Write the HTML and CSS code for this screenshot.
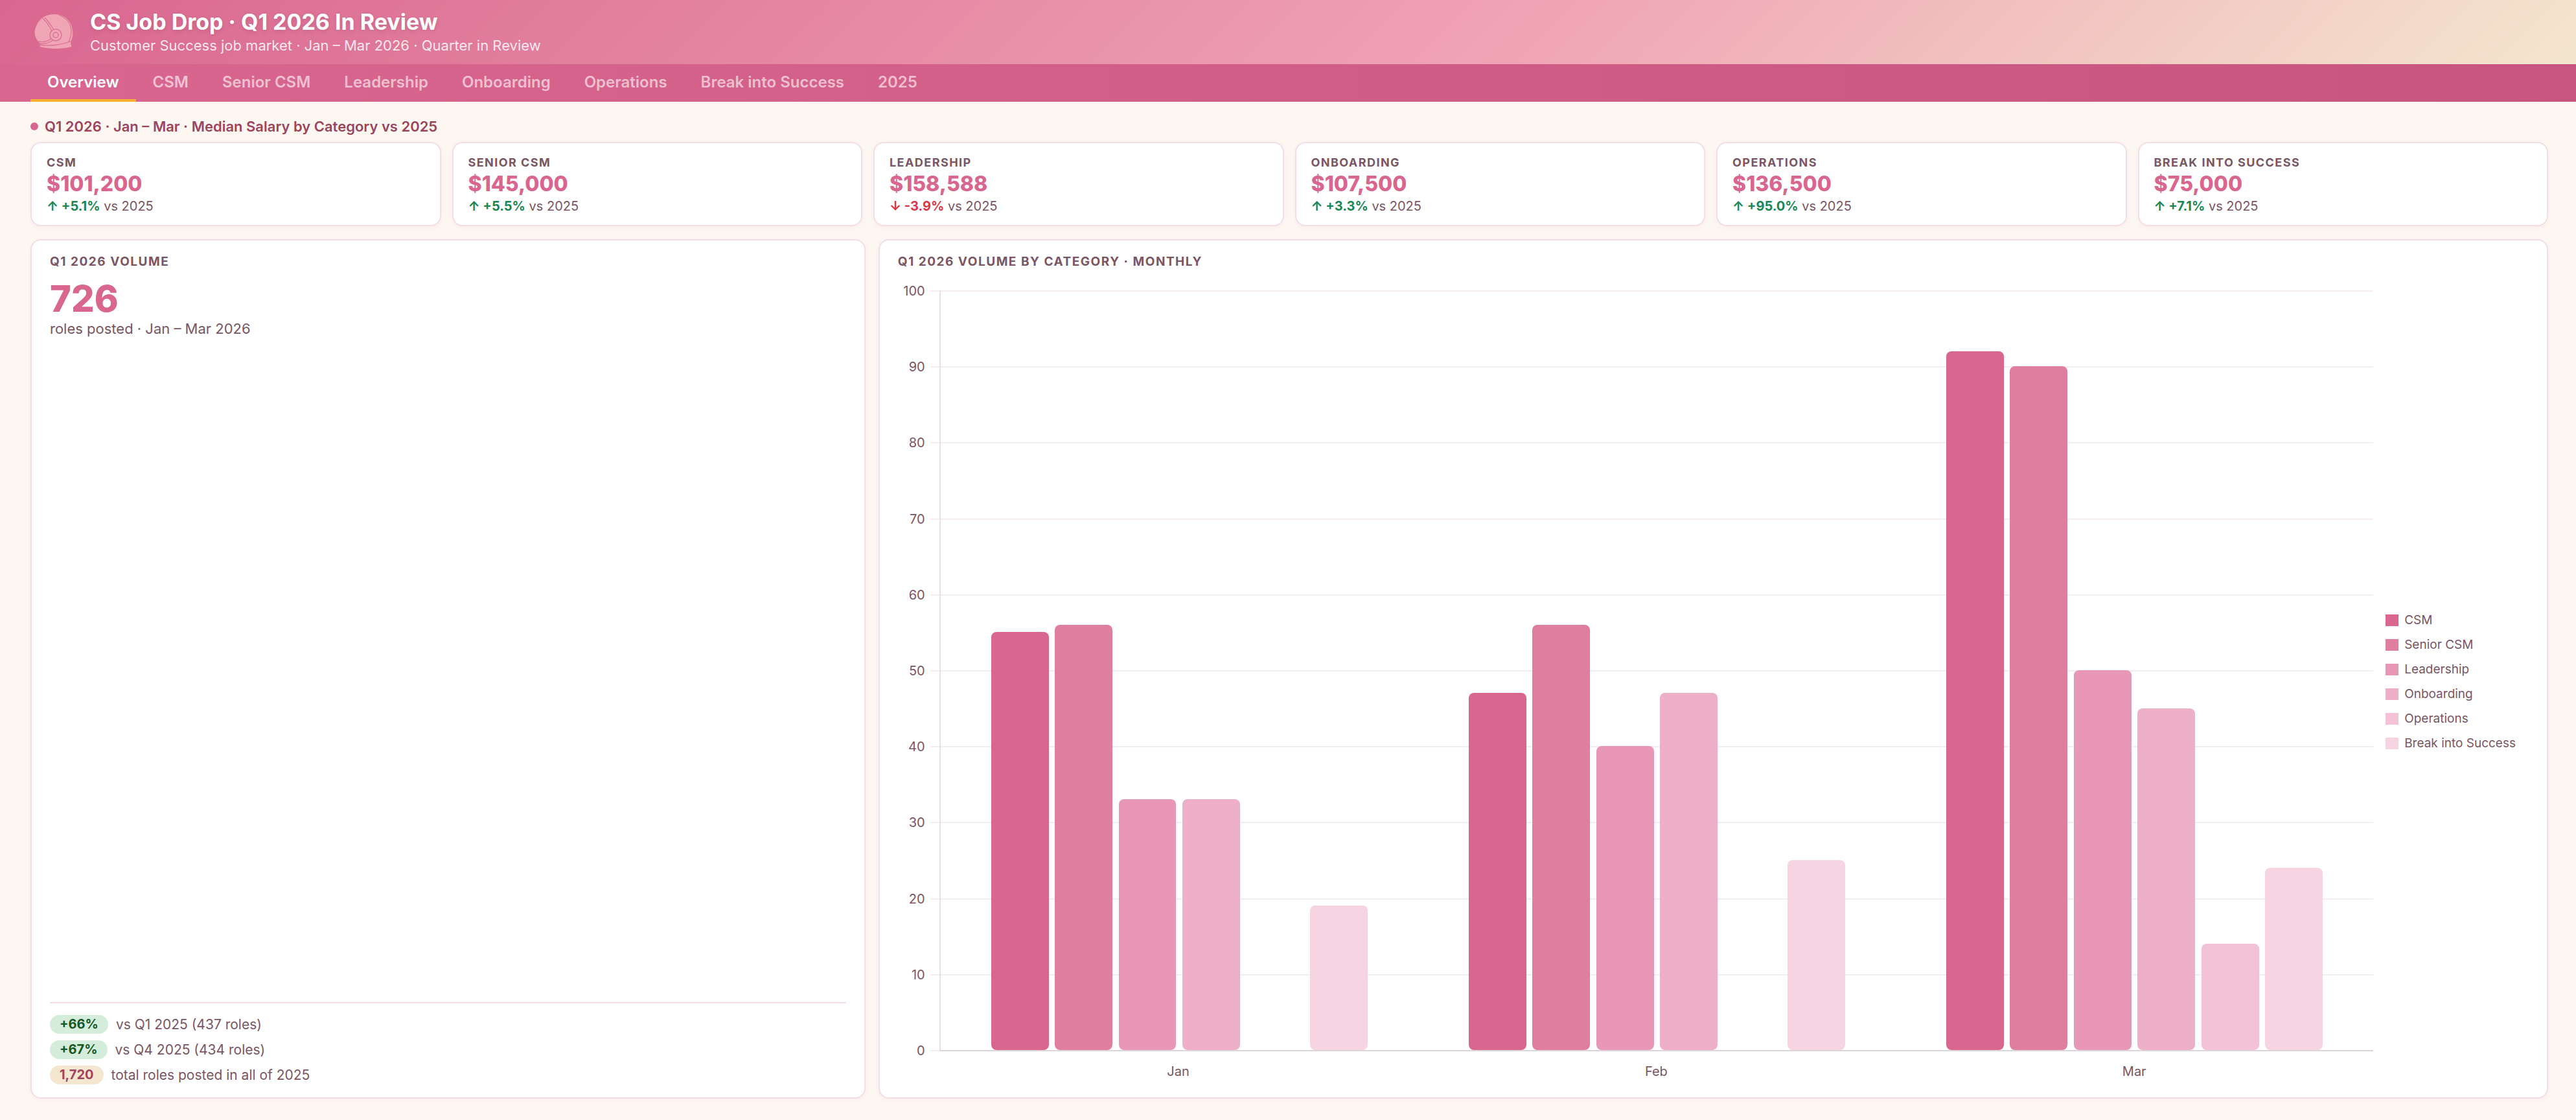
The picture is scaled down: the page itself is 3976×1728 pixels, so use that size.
FILE: index.html
```html
<!DOCTYPE html>
<html lang="en">
<head>
    <meta charset="UTF-8">
    <meta name="viewport" content="width=device-width, initial-scale=1.0">
    <title>CS Job Drop · Q1 2026 In Review</title>
    <link rel="stylesheet" href="styles.css">
</head>
<body>
    <header class="header">
        <svg class="logo" viewBox="0 0 76 60" aria-hidden="true">
            <path class="helmet" d="M12 45C6 38 5 29 9 21C14 9 24 3 37 3C53 3 64 14 65 29C66 36 64 42 62 46L63 53C52 57 27 57 15 53L14 48Z"/>
            <path class="helmet-line" d="M22 8C27 13 32 20 36 27M19 9C25 15 30 22 33 29M12 45C22 47 28 44 32 40M13 48C24 50 31 46 36 42M14 50C29 53 48 50 62 45M44 4C56 9 63 18 63 30C63 36 61 41 59 46"/>
            <circle class="helmet-ear" cx="39" cy="35" r="9"/>
            <circle class="helmet-ear" cx="39" cy="35" r="4"/>
        </svg>
        <div>
            <h1>CS Job Drop · Q1 2026 In Review</h1>
            <p class="subtitle">Customer Success job market · Jan – Mar 2026 · Quarter in Review</p>
        </div>
    </header>
    <nav class="tabs">
        <button class="tab active">Overview</button>
        <button class="tab">CSM</button>
        <button class="tab">Senior CSM</button>
        <button class="tab">Leadership</button>
        <button class="tab">Onboarding</button>
        <button class="tab">Operations</button>
        <button class="tab">Break into Success</button>
        <button class="tab">2025</button>
    </nav>
    <main class="content">
        <h2 class="section-title">Q1 2026 · Jan – Mar · Median Salary by Category vs 2025</h2>
        <div class="kpi-row">
            <div class="kpi">
                <div class="kpi-label">CSM</div>
                <div class="kpi-value">$101,200</div>
                <div class="kpi-delta"><b class="up">↑ +5.1%</b> vs 2025</div>
            </div>
            <div class="kpi">
                <div class="kpi-label">Senior CSM</div>
                <div class="kpi-value">$145,000</div>
                <div class="kpi-delta"><b class="up">↑ +5.5%</b> vs 2025</div>
            </div>
            <div class="kpi">
                <div class="kpi-label">Leadership</div>
                <div class="kpi-value">$158,588</div>
                <div class="kpi-delta"><b class="down">↓ -3.9%</b> vs 2025</div>
            </div>
            <div class="kpi">
                <div class="kpi-label">Onboarding</div>
                <div class="kpi-value">$107,500</div>
                <div class="kpi-delta"><b class="up">↑ +3.3%</b> vs 2025</div>
            </div>
            <div class="kpi">
                <div class="kpi-label">Operations</div>
                <div class="kpi-value">$136,500</div>
                <div class="kpi-delta"><b class="up">↑ +95.0%</b> vs 2025</div>
            </div>
            <div class="kpi">
                <div class="kpi-label">Break into Success</div>
                <div class="kpi-value">$75,000</div>
                <div class="kpi-delta"><b class="up">↑ +7.1%</b> vs 2025</div>
            </div>
        </div>
        <div class="panels">
            <section class="card">
                <h3 class="card-title">Q1 2026 Volume</h3>
                <div class="big-number">726</div>
                <div class="big-caption">roles posted · Jan – Mar 2026</div>
                <div class="compare">
                    <div class="compare-row"><span class="pill">+66%</span>vs Q1 2025 (437 roles)</div>
                    <div class="compare-row"><span class="pill">+67%</span>vs Q4 2025 (434 roles)</div>
                    <div class="compare-row"><span class="pill neutral">1,720</span>total roles posted in all of 2025</div>
                </div>
            </section>
            <section class="card">
                <h3 class="card-title">Q1 2026 Volume by Category · Monthly</h3>
                <div class="chart">
                    <div class="chart-main">
                        <div class="plot">
                            <div class="gridlines">
                                <div class="grid-row">100</div>
                                <div class="grid-row">90</div>
                                <div class="grid-row">80</div>
                                <div class="grid-row">70</div>
                                <div class="grid-row">60</div>
                                <div class="grid-row">50</div>
                                <div class="grid-row">40</div>
                                <div class="grid-row">30</div>
                                <div class="grid-row">20</div>
                                <div class="grid-row">10</div>
                                <div class="grid-row">0</div>
                            </div>
                            <div class="bars">
                                <div class="month">
                                    <div class="bar csm" style="height: 55%"></div>
                                    <div class="bar senior" style="height: 56%"></div>
                                    <div class="bar leadership" style="height: 33%"></div>
                                    <div class="bar onboarding" style="height: 33%"></div>
                                    <div class="bar operations" style="height: 0%"></div>
                                    <div class="bar break" style="height: 19%"></div>
                                </div>
                                <div class="month">
                                    <div class="bar csm" style="height: 47%"></div>
                                    <div class="bar senior" style="height: 56%"></div>
                                    <div class="bar leadership" style="height: 40%"></div>
                                    <div class="bar onboarding" style="height: 47%"></div>
                                    <div class="bar operations" style="height: 0%"></div>
                                    <div class="bar break" style="height: 25%"></div>
                                </div>
                                <div class="month">
                                    <div class="bar csm" style="height: 92%"></div>
                                    <div class="bar senior" style="height: 90%"></div>
                                    <div class="bar leadership" style="height: 50%"></div>
                                    <div class="bar onboarding" style="height: 45%"></div>
                                    <div class="bar operations" style="height: 14%"></div>
                                    <div class="bar break" style="height: 24%"></div>
                                </div>
                            </div>
                        </div>
                        <div class="x-labels">
                            <span>Jan</span>
                            <span>Feb</span>
                            <span>Mar</span>
                        </div>
                    </div>
                    <ul class="legend">
                        <li><span class="swatch csm"></span>CSM</li>
                        <li><span class="swatch senior"></span>Senior CSM</li>
                        <li><span class="swatch leadership"></span>Leadership</li>
                        <li><span class="swatch onboarding"></span>Onboarding</li>
                        <li><span class="swatch operations"></span>Operations</li>
                        <li><span class="swatch break"></span>Break into Success</li>
                    </ul>
                </div>
            </section>
        </div>
    </main>
</body>
</html>
```

FILE: styles.css
```css
* {
    box-sizing: border-box;
    margin: 0;
    padding: 0;
}
body {
    font-family: Inter, "Liberation Sans", sans-serif;
    font-size: 20px;
    color: #7a5563;
    background: #fdf7f2;
    min-height: 100vh;
    display: flex;
    flex-direction: column;
}

/* header */
.header {
    display: flex;
    align-items: center;
    gap: 16px;
    padding: 14px 47px 15px;
    background: linear-gradient(135deg, #d9668f 0%, #f0a5b5 60%, #f4e6ce 100%);
    color: white;
}
.logo {
    width: 76px;
    height: 60px;
}
.helmet {
    fill: #f0a5b5;
}
.helmet-line {
    fill: none;
    stroke: #dc7395;
    stroke-width: 1.3;
}
.helmet-ear {
    fill: #f0a5b5;
    stroke: #dc7395;
    stroke-width: 1.5;
}
h1 {
    font-size: 34px;
    font-weight: 700;
    line-height: 40px;
    text-shadow: 0 2px 6px rgba(0, 0, 0, 0.12);
}
.subtitle {
    font-size: 22px;
    line-height: 28px;
    margin-top: 2px;
    color: rgba(255, 255, 255, 0.85);
}

/* tabs */
.tabs {
    display: flex;
    padding: 0 47px;
    background: linear-gradient(90deg, #d9668f, #c8557f);
}
.tab {
    font-family: inherit;
    font-size: 24px;
    font-weight: 600;
    line-height: 28px;
    padding: 14px 26px 12px;
    border: none;
    border-bottom: 4px solid transparent;
    background: none;
    color: rgba(255, 255, 255, 0.6);
    cursor: pointer;
}
.tab.active {
    color: white;
    border-bottom-color: #fbb02d;
}

.content {
    flex: 1;
    display: flex;
    flex-direction: column;
    padding: 25px 43px 33px 47px;
}
.section-title {
    display: flex;
    align-items: center;
    gap: 10px;
    font-size: 22px;
    font-weight: 600;
    line-height: 26px;
    color: #9b445c;
    margin-bottom: 11px;
}
.section-title::before {
    content: "";
    width: 12px;
    height: 12px;
    border-radius: 50%;
    background: #d9668f;
}

/* salary cards */
.kpi-row {
    display: grid;
    grid-template-columns: repeat(6, 1fr);
    gap: 17px;
    margin-bottom: 20px;
}
.kpi, .card {
    background: white;
    border: 2px solid #f3dde6;
    border-radius: 16px;
    box-shadow: 0 2px 8px rgba(217, 102, 143, 0.08);
}
.kpi {
    padding: 19px 23px 17px;
}
.kpi-label, .card-title {
    font-weight: 700;
    text-transform: uppercase;
    letter-spacing: 0.08em;
}
.kpi-label {
    font-size: 18px;
    line-height: 22px;
}
.kpi-value {
    font-size: 32px;
    font-weight: 800;
    line-height: 36px;
    margin: 4px 0;
    color: #d9668f;
}
.kpi-delta {
    font-size: 20px;
    line-height: 24px;
}
.up {
    color: #198754;
}
.down {
    color: #dc3545;
}

.panels {
    flex: 1;
    display: grid;
    grid-template-columns: 1fr 2fr;
    gap: 20px;
}
.card {
    display: flex;
    flex-direction: column;
    padding: 21px 28px 20px;
}
.card-title {
    font-size: 19px;
    line-height: 24px;
}
.big-number {
    font-size: 56px;
    font-weight: 800;
    line-height: 56px;
    margin: 17px 0 5px;
    color: #d9668f;
}
.big-caption {
    font-size: 22px;
    line-height: 26px;
}
.compare {
    display: flex;
    flex-direction: column;
    gap: 10px;
    margin-top: auto;
    padding-top: 18px;
    border-top: 2px solid #f3dde6;
    font-size: 21px;
}
.compare-row {
    display: flex;
    gap: 12px;
    line-height: 29px;
}
.pill {
    padding: 0 15px;
    border-radius: 16px;
    font-size: 20px;
    font-weight: 700;
    background: #d4edda;
    color: #155724;
}
.pill.neutral {
    background: #f5e6d0;
    color: #a04460;
}

/* chart */
.chart {
    flex: 1;
    display: flex;
    gap: 19px;
    margin-top: 15px;
}
.chart-main {
    flex: 1;
    display: flex;
    flex-direction: column;
    padding: 6px 0 8px;
}
.plot {
    flex: 1;
    display: grid;
}
.gridlines, .bars {
    grid-area: 1 / 1;
}
.gridlines {
    display: flex;
    flex-direction: column;
    justify-content: space-between;
}
.grid-row {
    display: flex;
    align-items: center;
    justify-content: flex-end;
    gap: 8px;
    line-height: 24px;
}
.grid-row::after {
    content: "";
    width: calc(100% - 50px);
    height: 2px;
    background: #f5eef1;
}
.bars {
    display: flex;
    margin: 11px 0 11px 64px;
    border-left: 2px solid #e6e2e4;
    border-bottom: 2px solid #ddd5d9;
}
.month {
    flex: 1;
    display: flex;
    align-items: flex-end;
    justify-content: space-between;
    padding: 0 78px;
}
.bar {
    width: 15.3%;
    border-radius: 8px;
}
.csm { background: #d9668f; }
.senior { background: #e07e9f; }
.leadership { background: #e897b6; }
.onboarding { background: #eeb0c9; }
.operations { background: #f4c2d7; }
.break { background: #f7d4e2; }
.x-labels {
    display: flex;
    margin: 8px 0 0 64px;
    line-height: 24px;
    text-align: center;
}
.x-labels span {
    flex: 1;
}
.legend {
    align-self: center;
    display: flex;
    flex-direction: column;
    gap: 14px;
    padding-right: 20px;
    list-style: none;
    font-size: 19px;
    line-height: 24px;
}
.legend li {
    display: flex;
    align-items: center;
    gap: 9px;
}
.swatch {
    width: 20px;
    height: 18px;
}
```
